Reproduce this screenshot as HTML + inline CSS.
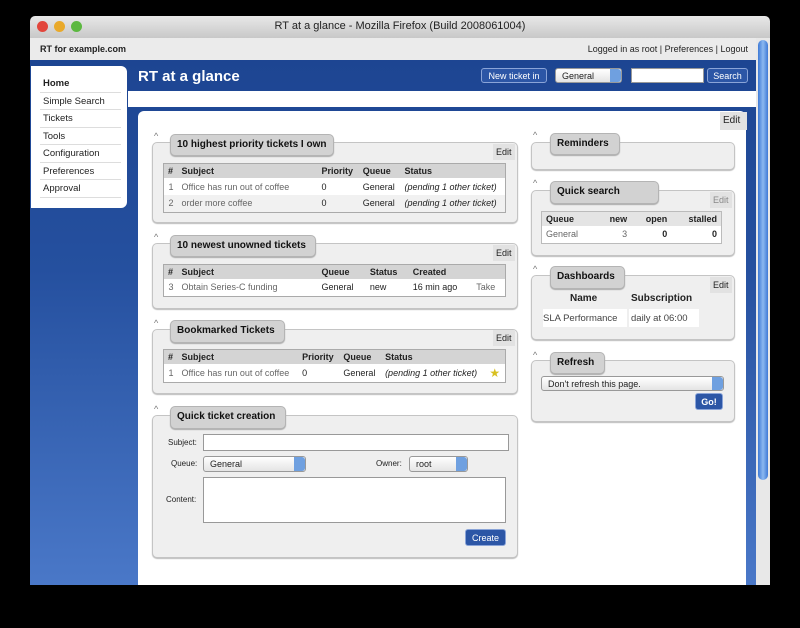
<!DOCTYPE html>
<html><head><meta charset="utf-8"><style>
*{box-sizing:border-box;margin:0;padding:0}
body{width:800px;height:628px;background:#000;position:relative;overflow:hidden;font-family:"Liberation Sans",sans-serif;font-size:9px;color:#222}
.a{position:absolute}
.box{position:absolute;background:#efefef;border:1px solid #c4c4c4;border-radius:5px;box-shadow:0 1px 1px #bbb}
.tab{position:absolute;background:#d2d2d2;border:1px solid #b4b4b4;border-radius:5px;font-weight:bold;font-size:10px;padding:4px 6px;color:#111;box-shadow:0 1px 1px #aaa;white-space:nowrap;overflow:hidden}
.car{position:absolute;font-size:9px;color:#777}
.edit{position:absolute;background:#e2e2e2;font-size:9px;padding:3px 3px;color:#222}
table{position:absolute;border-collapse:collapse;border:1px solid #aaa;background:#fff;font-size:9px}
th{background:#d4d4d4;text-align:left;font-weight:bold;padding:2px 4px;height:14px;white-space:nowrap}
td{padding:2px 4px;height:17px;color:#222;white-space:nowrap}
td.g{color:#666}
tr.alt td{background:#f1f1f1}
.btn{position:absolute;background:#2c56a6;color:#fff;border:1px solid #8aa4d8;border-radius:3px;font-size:9px;text-align:center}
.sel{position:absolute;background:linear-gradient(#fff,#e4e4e4);border:1px solid #999;border-radius:3px;font-size:9px;padding:2px 6px}
.sel:after{content:"";position:absolute;right:0;top:0;bottom:0;width:11px;background:#6fa0e0;border-radius:0 3px 3px 0}
.inp{position:absolute;background:#fff;border:1px solid #999}
.nav div{height:17.5px;border-bottom:1px solid #ddd;padding:3px 0 0 3px;font-size:9.5px}
</style></head><body>
<div class="a" style="left:30px;top:16px;width:740px;height:22px;background:linear-gradient(#e8e8e8,#c8c8c8);border-radius:5px 5px 0 0;text-align:center;font-size:11px;padding-top:4px;color:#222">RT at a glance - Mozilla Firefox (Build 2008061004)</div>
<div class="a" style="left:37px;top:21px;width:11px;height:11px;border-radius:50%;background:#e2463c"></div>
<div class="a" style="left:54px;top:21px;width:11px;height:11px;border-radius:50%;background:#e9a92a"></div>
<div class="a" style="left:71px;top:21px;width:11px;height:11px;border-radius:50%;background:#5cb840"></div>
<div class="a" style="left:30px;top:38px;width:726px;height:22px;background:#ebebeb;font-size:9px">
 <span class="a" style="left:10px;top:6px;font-weight:bold">RT for example.com</span>
 <span class="a" style="right:8px;top:6px">Logged in as root | Preferences | Logout</span></div>
<div class="a" style="left:756px;top:38px;width:14px;height:547px;background:#e8e8e8"></div>
<div class="a" style="left:758px;top:40px;width:10px;height:440px;border-radius:5px;background:linear-gradient(90deg,#3e7ad6,#8bb8f0,#3e7ad6)"></div>
<div class="a" style="left:30px;top:60px;width:726px;height:525px;background:linear-gradient(#1d4592 0%,#25509f 40%,#4a78c8 100%)"></div>
<div class="a" style="left:138px;top:68px;font-size:15px;font-weight:bold;color:#fff">RT at a glance</div>
<div class="btn" style="left:481px;top:68px;width:66px;height:15px;padding-top:2px">New ticket in</div>
<div class="sel" style="left:555px;top:68px;width:67px;height:15px">General</div>
<div class="inp" style="left:631px;top:68px;width:73px;height:15px"></div>
<div class="btn" style="left:707px;top:68px;width:41px;height:15px;padding-top:2px">Search</div>
<div class="a" style="left:128px;top:91px;width:628px;height:16px;background:#fff"></div>
<div class="a" style="left:138px;top:111px;width:608px;height:474px;background:#fff;border-radius:6px 6px 0 0"></div>
<div class="a nav" style="left:31px;top:66px;width:96px;height:142px;background:#fff;border-radius:0 6px 6px 0;padding:9px 6px 0 9px">
<div style="font-weight:bold">Home</div><div>Simple Search</div><div>Tickets</div><div>Tools</div><div>Configuration</div><div>Preferences</div><div>Approval</div></div>
<div class="edit" style="left:720px;top:112px;width:27px;height:18px;font-size:10px;padding:3px 3px">Edit</div>

<div class="car" style="left:154px;top:131px">^</div>
<div class="box" style="left:152px;top:142px;width:366px;height:81px"></div>
<div class="tab" style="left:170px;top:134px;width:164px;height:22px">10 highest priority tickets I own</div>
<div class="edit" style="left:493px;top:144px">Edit</div>
<table style="left:163px;top:163px;width:343px"><tr><th style="width:14px">#</th><th style="width:140px">Subject</th><th>Priority</th><th>Queue</th><th>Status</th></tr>
<tr><td class="g" style="text-align:right">1</td><td class="g">Office has run out of coffee</td><td>0</td><td>General</td><td><i>(pending 1 other ticket)</i></td></tr>
<tr class="alt"><td class="g" style="text-align:right">2</td><td class="g">order more coffee</td><td>0</td><td>General</td><td><i>(pending 1 other ticket)</i></td></tr></table>

<div class="car" style="left:154px;top:232px">^</div>
<div class="box" style="left:152px;top:243px;width:366px;height:66px"></div>
<div class="tab" style="left:170px;top:235px;width:146px;height:22px">10 newest unowned tickets</div>
<div class="edit" style="left:493px;top:245px">Edit</div>
<table style="left:163px;top:264px;width:343px"><tr><th style="width:14px">#</th><th style="width:140px">Subject</th><th>Queue</th><th>Status</th><th>Created</th><th></th></tr>
<tr><td class="g" style="text-align:right">3</td><td class="g">Obtain Series-C funding</td><td>General</td><td>new</td><td>16 min ago</td><td class="g">Take</td></tr></table>

<div class="car" style="left:154px;top:318px">^</div>
<div class="box" style="left:152px;top:329px;width:366px;height:65px"></div>
<div class="tab" style="left:170px;top:320px;width:115px;height:23px">Bookmarked Tickets</div>
<div class="edit" style="left:493px;top:330px">Edit</div>
<table style="left:163px;top:349px;width:343px"><tr><th style="width:14px">#</th><th>Subject</th><th>Priority</th><th>Queue</th><th>Status</th><th></th></tr>
<tr><td class="g" style="text-align:right">1</td><td class="g">Office has run out of coffee</td><td>0</td><td>General</td><td><i>(pending 1 other ticket)</i></td><td style="color:#d8c020;font-size:12px">★</td></tr></table>

<div class="car" style="left:154px;top:404px">^</div>
<div class="box" style="left:152px;top:415px;width:366px;height:143px"></div>
<div class="tab" style="left:170px;top:406px;width:116px;height:23px">Quick ticket creation</div>
<div class="a" style="left:168px;top:438px;font-size:8px">Subject:</div>
<div class="inp" style="left:203px;top:434px;width:306px;height:17px"></div>
<div class="a" style="left:171px;top:459px;font-size:8px">Queue:</div>
<div class="sel" style="left:203px;top:456px;width:103px;height:16px">General</div>
<div class="a" style="left:376px;top:459px;font-size:8px">Owner:</div>
<div class="sel" style="left:409px;top:456px;width:59px;height:16px">root</div>
<div class="a" style="left:166px;top:495px;font-size:8px">Content:</div>
<div class="inp" style="left:203px;top:477px;width:303px;height:46px"></div>
<div class="btn" style="left:465px;top:529px;width:41px;height:17px;padding-top:3px">Create</div>

<div class="car" style="left:533px;top:130px">^</div>
<div class="box" style="left:531px;top:142px;width:204px;height:28px"></div>
<div class="tab" style="left:550px;top:133px;width:70px;height:22px">Reminders</div>

<div class="car" style="left:533px;top:178px">^</div>
<div class="box" style="left:531px;top:190px;width:204px;height:66px"></div>
<div class="tab" style="left:550px;top:181px;width:109px;height:23px">Quick search</div>
<div class="edit" style="left:710px;top:192px;color:#888">Edit</div>
<table style="left:541px;top:211px;width:181px;border-color:#bbb"><tr><th style="background:#e4e4e4">Queue</th><th style="background:#e4e4e4;text-align:right">new</th><th style="background:#e4e4e4;text-align:right">open</th><th style="background:#e4e4e4;text-align:right">stalled</th></tr>
<tr><td class="g">General</td><td class="g" style="text-align:right">3</td><td style="text-align:right;font-weight:bold">0</td><td style="text-align:right;font-weight:bold">0</td></tr></table>

<div class="car" style="left:533px;top:264px">^</div>
<div class="box" style="left:531px;top:275px;width:204px;height:65px"></div>
<div class="tab" style="left:550px;top:266px;width:75px;height:23px">Dashboards</div>
<div class="edit" style="left:710px;top:277px">Edit</div>
<div class="a" style="left:570px;top:293px;font-weight:bold;font-size:10px">Name</div>
<div class="a" style="left:631px;top:293px;font-weight:bold;font-size:10px">Subscription</div>
<div class="a" style="left:543px;top:309px;width:84px;height:18px;background:#fff;font-size:9.5px;padding-top:4px;color:#444">SLA Performance</div>
<div class="a" style="left:629px;top:309px;width:70px;height:18px;background:#fff;font-size:9.5px;padding:4px 0 0 2px;color:#444">daily at 06:00</div>

<div class="car" style="left:533px;top:350px">^</div>
<div class="box" style="left:531px;top:360px;width:204px;height:62px"></div>
<div class="tab" style="left:550px;top:352px;width:55px;height:22px">Refresh</div>
<div class="sel" style="left:541px;top:376px;width:183px;height:15px">Don't refresh this page.</div>
<div class="btn" style="left:695px;top:393px;width:28px;height:17px;padding-top:3px;font-weight:bold">Go!</div>
</body></html>
